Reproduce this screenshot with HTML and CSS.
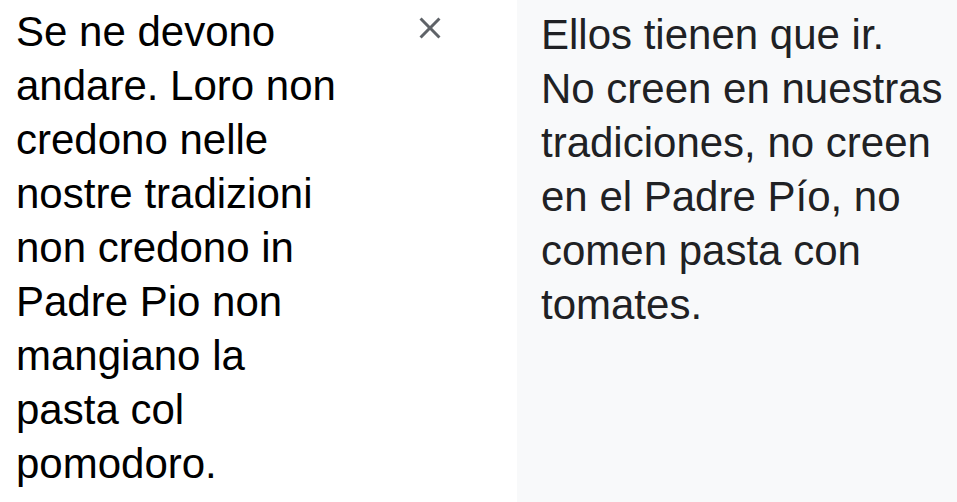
FILE: index.html
```html
<!DOCTYPE html>
<html lang="it">
<head>
<meta charset="utf-8">
<title>Traduzione</title>
<link rel="stylesheet" href="styles.css">
</head>
<body>
<main class="translate">
  <section class="source">
    <div class="source-text">Se ne devono andare. Loro non credono nelle nostre tradizioni non credono in Padre Pio non mangiano la pasta col pomodoro.</div>
    <button class="clear" type="button" aria-label="Cancella testo">
      <svg viewBox="0 0 24 24" width="36" height="36" aria-hidden="true"><path d="M19 6.41L17.59 5 12 10.59 6.41 5 5 6.41 10.59 12 5 17.59 6.41 19 12 13.41 17.59 19 19 17.59 13.41 12z" fill="#5f6368"/></svg>
    </button>
  </section>
  <section class="target">
    <div class="target-text" lang="es">Ellos tienen que ir. No creen en nuestras tradiciones, no creen en el Padre Pío, no comen pasta con tomates.</div>
  </section>
</main>
</body>
</html>
```
FILE: styles.css
```css
html, body {
  margin: 0;
  padding: 0;
  background: #ffffff;
}
.translate {
  display: flex;
  height: 502px;
  overflow: hidden;
  font-family: "Liberation Sans", Arial, sans-serif;
  font-size: 42px;
  line-height: 54px;
}
.source {
  width: 517px;
  flex: none;
  display: flex;
  align-items: flex-start;
}
.source-text {
  width: 330px;
  margin-left: 16px;
  padding-top: 5px;
  color: #000000;
}
.clear {
  width: 48px;
  height: 48px;
  margin-left: 60px;
  margin-top: 4px;
  padding: 0;
  border: 0;
  background: transparent;
  display: flex;
  align-items: center;
  justify-content: center;
}
.clear svg {
  display: block;
}
.target {
  flex: 1;
  background: #f8f9fa;
  padding: 8px 10px 0 24px;
}
.target-text {
  color: #202124;
}
```
